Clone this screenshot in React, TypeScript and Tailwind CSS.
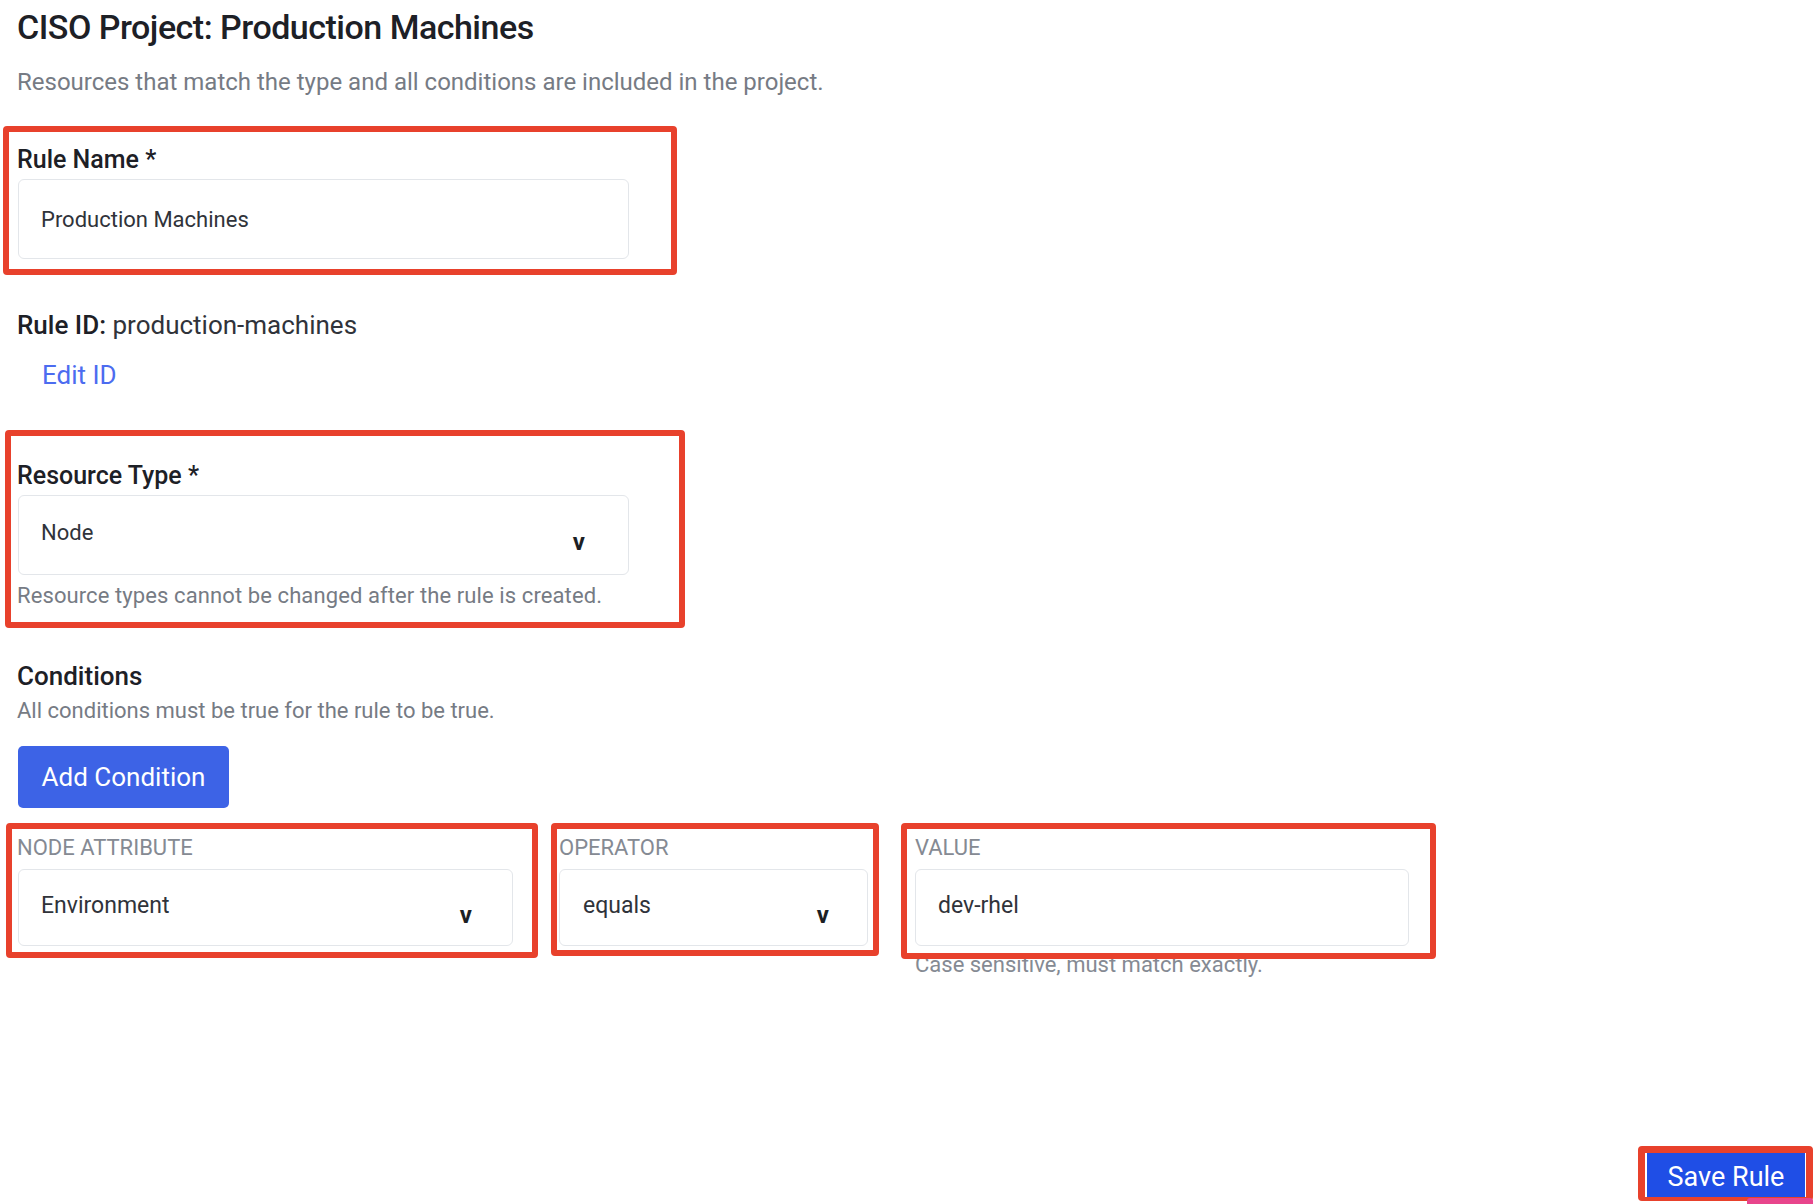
import { ReactNode } from "react"

function RedBox({ className, children }: { className: string; children: ReactNode }) {
  return <div className={`relative z-10 border-[6px] border-[#e8412c] rounded-[4px] ${className}`}>{children}</div>
}

function Chevron() {
  return <span className="mt-[14px] text-[24px] font-bold leading-none text-[#1c1f24]">v</span>
}

export default function App() {
  return (
    <div className="relative h-[1204px] w-full overflow-hidden bg-white flex flex-col pl-[3px] font-['Roboto',sans-serif] text-[#1f2329]">
      <h1 className="ml-[14px] mt-[7px] text-[34px] font-medium leading-[40px] tracking-[-0.5px] text-[#1d2026]">
        CISO Project: Production Machines
      </h1>
      <p className="ml-[14px] mt-[21px] text-[24px] leading-[28px] text-[#767b84]">
        Resources that match the type and all conditions are included in the project.
      </p>

      {/* Rule name */}
      <RedBox className="mt-[30px] w-[674px] pl-[8px] pt-[14px] pb-[10px]">
        <label className="block text-[25px] font-medium leading-[28px] text-[#1d2026]">Rule Name *</label>
        <div className="mt-[5px] ml-px w-[611px] h-[80px] flex items-center pl-[22px] border border-[#e3e6ea] rounded-[6px] text-[22px] text-[#30333a]">
          Production Machines
        </div>
      </RedBox>

      <div className="ml-[14px] mt-[35px] text-[26px] leading-[30px] text-[#30333a]">
        <span className="font-medium text-[#1d2026]">Rule ID:</span> production-machines
      </div>
      <div className="ml-[39px] mt-[20px] text-[26px] leading-[30px] text-[#4c6cf0]">Edit ID</div>

      {/* Resource type */}
      <RedBox className="ml-[2px] mt-[40px] w-[680px] pl-[6px] pt-[26px] pb-[13px]">
        <label className="block text-[25px] font-medium leading-[28px] text-[#1d2026]">Resource Type *</label>
        <div className="mt-[5px] ml-px w-[611px] h-[80px] flex items-center justify-between pl-[22px] pr-[43px] border border-[#e3e6ea] rounded-[6px] text-[22px] text-[#30333a]">
          <span className="-mt-[6px]">Node</span>
          <Chevron />
        </div>
        <p className="mt-[8px] text-[22px] leading-[26px] tracking-[0.1px] text-[#767b84]">
          Resource types cannot be changed after the rule is created.
        </p>
      </RedBox>

      {/* Conditions */}
      <h2 className="ml-[14px] mt-[34px] text-[26px] font-medium leading-[28px] text-[#1d2026]">Conditions</h2>
      <p className="ml-[14px] mt-[8px] text-[22px] leading-[26px] text-[#767b84]">
        All conditions must be true for the rule to be true.
      </p>
      <button className="ml-[15px] mt-[22px] w-[211px] h-[62px] rounded-[5px] bg-[#3d63e6] text-[26px] text-white">
        Add Condition
      </button>

      <div className="mt-[15px] flex items-start">
        <RedBox className="ml-[3px] w-[532px] h-[135px] pl-[5px] pt-[7px]">
          <div className="text-[22px] leading-[24px] uppercase text-[#858a93]">Node Attribute</div>
          <div className="mt-[9px] ml-px w-[495px] h-[77px] flex items-center justify-between pl-[22px] pr-[40px] border border-[#e3e6ea] rounded-[6px] text-[23px] text-[#30333a]">
            <span className="-mt-[3px]">Environment</span>
            <Chevron />
          </div>
        </RedBox>
        <RedBox className="ml-[13px] w-[328px] h-[133px] pl-[2px] pt-[7px]">
          <div className="text-[22px] leading-[24px] uppercase text-[#858a93]">Operator</div>
          <div className="mt-[9px] w-[309px] h-[77px] flex items-center justify-between pl-[23px] pr-[38px] border border-[#e3e6ea] rounded-[6px] text-[23px] text-[#30333a]">
            <span className="-mt-[3px]">equals</span>
            <Chevron />
          </div>
        </RedBox>
        <div className="ml-[22px] flex flex-col">
          <RedBox className="w-[535px] h-[136px] pl-[8px] pt-[7px]">
            <div className="text-[22px] leading-[24px] uppercase text-[#858a93]">Value</div>
            <div className="mt-[9px] w-[494px] h-[77px] flex items-center pl-[22px] border border-[#e3e6ea] rounded-[6px] text-[23px] text-[#30333a]">
              <span className="-mt-[3px]">dev-rhel</span>
            </div>
          </RedBox>
          <p className="ml-[14px] -mt-[6px] text-[22px] leading-[24px] text-[#858a93]">Case sensitive, must match exactly.</p>
        </div>
      </div>

      {/* Save */}
      <div className="mt-auto self-end mr-[1px] mb-[3px] relative">
        <div className="border-[7px] border-b-[4px] border-[#e8412c] rounded-[4px] pl-[2px] pr-[1px] pt-0">
          <button className="w-[158px] h-[44px] pt-[5px] bg-[#1f4ee6] text-[27px] text-white leading-none">Save Rule</button>
        </div>
        <div className="absolute -bottom-[3px] right-[0px] w-[66px] h-[6px] rounded-t-[3px] bg-[#e8458c]" />
      </div>
    </div>
  )
}
